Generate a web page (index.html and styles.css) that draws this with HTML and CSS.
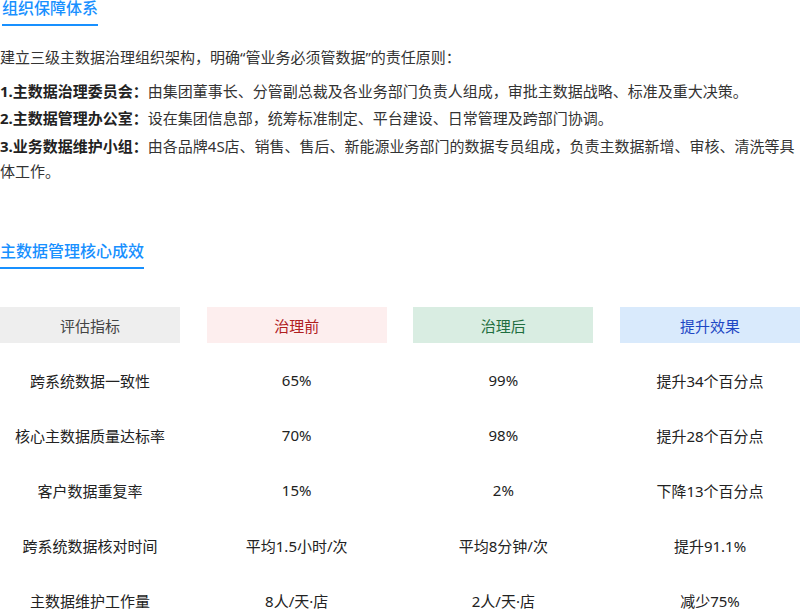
FILE: index.html
```html
<!DOCTYPE html>
<html lang="zh-CN">
<head>
<meta charset="utf-8">
<title>主数据治理</title>
<link rel="stylesheet" href="styles.css">
</head>
<body>
<main class="page">
  <section class="block block-org">
    <h2 class="sec-title first">组织保障体系</h2>
    <p class="intro">建立三级主数据治理组织架构，明确“管业务必须管数据”的责任原则：</p>
    <p class="item"><strong>1.主数据治理委员会：</strong>由集团董事长、分管副总裁及各业务部门负责人组成，审批主数据战略、标准及重大决策。</p>
    <p class="item"><strong>2.主数据管理办公室：</strong>设在集团信息部，统筹标准制定、平台建设、日常管理及跨部门协调。</p>
    <p class="item"><strong>3.业务数据维护小组：</strong>由各品牌4S店、销售、售后、新能源业务部门的数据专员组成，负责主数据新增、审核、清洗等具体工作。</p>
  </section>

  <section class="block block-result">
    <h2 class="sec-title">主数据管理核心成效</h2>
    <div class="grid">
      <div class="cell head h-gray">评估指标</div>
      <div class="cell head h-red">治理前</div>
      <div class="cell head h-green">治理后</div>
      <div class="cell head h-blue">提升效果</div>

      <div class="cell">跨系统数据一致性</div>
      <div class="cell">65%</div>
      <div class="cell">99%</div>
      <div class="cell">提升34个百分点</div>

      <div class="cell">核心主数据质量达标率</div>
      <div class="cell">70%</div>
      <div class="cell">98%</div>
      <div class="cell">提升28个百分点</div>

      <div class="cell">客户数据重复率</div>
      <div class="cell">15%</div>
      <div class="cell">2%</div>
      <div class="cell">下降13个百分点</div>

      <div class="cell">跨系统数据核对时间</div>
      <div class="cell">平均1.5小时/次</div>
      <div class="cell">平均8分钟/次</div>
      <div class="cell">提升91.1%</div>

      <div class="cell">主数据维护工作量</div>
      <div class="cell">8人/天·店</div>
      <div class="cell">2人/天·店</div>
      <div class="cell">减少75%</div>
    </div>
  </section>
</main>
</body>
</html>
```

FILE: styles.css
```css
html, body {
  margin: 0;
  padding: 0;
  background: #ffffff;
}

body {
  font-family: "Noto Sans", "Noto Sans CJK SC", sans-serif;
  color: #333333;
  overflow: hidden;
}

.page {
  width: 800px;
}

.sec-title {
  display: block;
  width: fit-content;
  margin: 0;
  font-size: 16px;
  line-height: 16px;
  font-weight: 500;
  color: #1890ff;
  padding-bottom: 8px;
  border-bottom: 2px solid #1890ff;
}

.sec-title.first {
  margin-left: 2px;
}

.intro {
  margin: 18.5px 0 9px;
  font-size: 15px;
  line-height: 25px;
}

.item {
  margin: 0 0 2.5px;
  font-size: 15px;
  line-height: 25px;
}

.item strong {
  font-weight: 700;
  color: #222222;
}

.block-result {
  margin-top: 59px;
}

.grid {
  margin-top: 38.5px;
  display: grid;
  grid-template-columns: repeat(4, 1fr);
  column-gap: calc(80px / 3);
  row-gap: 19px;
}

.cell {
  height: 36px;
  display: flex;
  align-items: center;
  justify-content: center;
  font-size: 15px;
  color: #222222;
}

.head {
  color: #444444;
}

.h-gray {
  background: #eeeeee;
  color: #444444;
}

.h-red {
  background: #fdeeee;
  color: #b0201f;
}

.h-green {
  background: #d9ede2;
  color: #1f6e40;
}

.h-blue {
  background: #d9eafc;
  color: #1d47c4;
}
```
